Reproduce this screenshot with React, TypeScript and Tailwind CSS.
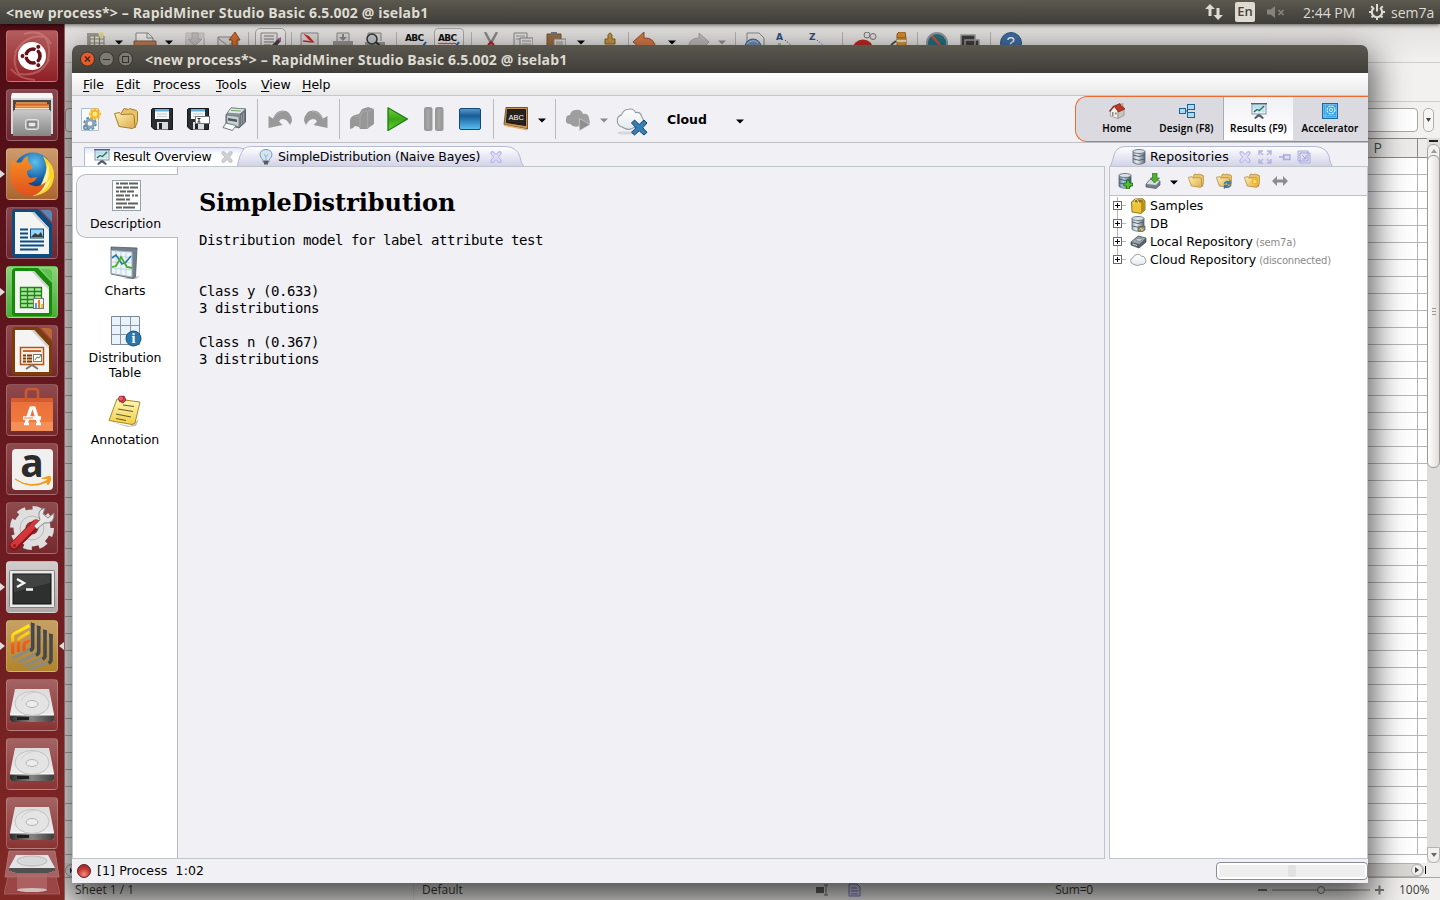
import React from "react";

type SvgProps = { w?: number; h?: number; box?: string; className?: string; children: React.ReactNode };
const Svg = ({ w = 24, h = 24, box, className, children }: SvgProps) => (
  <svg width={w} height={h} viewBox={box ?? `0 0 ${w} ${h}`} fill="none" className={`block shrink-0 ${className ?? ""}`}>
    {children}
  </svg>
);

const Defs = () => (
  <svg width="0" height="0" className="absolute">
    <defs>
      <linearGradient id="green" x1="0" y1="0" x2="0" y2="1"><stop stopColor="#6fd03c" /><stop offset=".5" stopColor="#3ba516" /><stop offset="1" stopColor="#5fd536" /></linearGradient>
      <linearGradient id="stop" x1="0" y1="0" x2="0" y2="1"><stop stopColor="#5b9bd0" /><stop offset=".35" stopColor="#175c97" /><stop offset="1" stopColor="#5cc0f5" /></linearGradient>
      <linearGradient id="folder" x1="0" y1="0" x2="1" y2="1"><stop stopColor="#fdf0b4" /><stop offset="1" stopColor="#dfac4c" /></linearGradient>
      <linearGradient id="metal" x1="0" y1="0" x2="1" y2="0"><stop stopColor="#a6b1bb" /><stop offset=".35" stopColor="#e8eef2" /><stop offset="1" stopColor="#5b6874" /></linearGradient>
      <linearGradient id="blueMetal" x1="0" y1="0" x2="1" y2="0"><stop stopColor="#5b7f9e" /><stop offset=".4" stopColor="#b9d3e6" /><stop offset="1" stopColor="#2f4c66" /></linearGradient>
      <linearGradient id="note" x1="0" y1="0" x2="0" y2="1"><stop stopColor="#fff8b8" /><stop offset="1" stopColor="#f3cf45" /></linearGradient>
      <linearGradient id="cloud" x1="0" y1="0" x2="0" y2="1"><stop stopColor="#ffffff" /><stop offset="1" stopColor="#e4e9ee" /></linearGradient>
      <linearGradient id="bag" x1="0" y1="0" x2="0" y2="1"><stop stopColor="#e96f3a" /><stop offset=".7" stopColor="#f0793c" /><stop offset="1" stopColor="#f58b4d" /></linearGradient>
      <linearGradient id="cab" x1="0" y1="0" x2="0" y2="1"><stop stopColor="#c9c9c9" /><stop offset="1" stopColor="#858585" /></linearGradient>
      <linearGradient id="disk" x1="0" y1="0" x2="0" y2="1"><stop stopColor="#dcdcdc" /><stop offset="1" stopColor="#f1f1f1" /></linearGradient>
      <linearGradient id="diskfront" x1="0" y1="0" x2="1" y2="0"><stop stopColor="#2e2e2e" /><stop offset=".5" stopColor="#858585" /><stop offset="1" stopColor="#3d3d3d" /></linearGradient>
      <linearGradient id="tab" x1="0" y1="0" x2="0" y2="1"><stop stopColor="#ffffff" /><stop offset="1" stopColor="#d3d3ea" /></linearGradient>
      <linearGradient id="tabon" x1="0" y1="0" x2="0" y2="1"><stop stopColor="#dfe4fb" /><stop offset=".4" stopColor="#ffffff" /><stop offset="1" stopColor="#ffffff" /></linearGradient>
      <radialGradient id="globe" cx=".55" cy=".25" r=".7"><stop stopColor="#5cc2ef" /><stop offset=".6" stopColor="#1963a8" /><stop offset="1" stopColor="#0c3470" /></radialGradient>
      <linearGradient id="fox" x1="0" y1="0" x2="0" y2="1"><stop stopColor="#f59224" /><stop offset="1" stopColor="#e0501c" /></linearGradient>
      <linearGradient id="miner" gradientUnits="userSpaceOnUse" x1="6" y1="10" x2="10" y2="30"><stop stopColor="#ffe413" /><stop offset=".45" stopColor="#fbc015" /><stop offset=".6" stopColor="#f2601a" /><stop offset="1" stopColor="#ee5416" /></linearGradient>
      <radialGradient id="red" cx=".5" cy=".75" r=".7"><stop stopColor="#f58d7f" /><stop offset=".6" stopColor="#c53a36" /><stop offset="1" stopColor="#9d2a2a" /></radialGradient>
      <linearGradient id="chartface" x1="0" y1="0" x2="0" y2="1"><stop stopColor="#bfe2f6" /><stop offset="1" stopColor="#f3fafe" /></linearGradient>
    </defs>
  </svg>
);

/* ---------- small shared glyphs ---------- */
const Caret = ({ color = "#000" }: { color?: string }) => (
  <Svg w={8} h={5}><path d="M0 0.5H8L4 4.5Z" fill={color} /></Svg>
);
const FolderShape = () => (
  <g>
    <path d="M7 6.5L10 1.5L14.5 2.5L15.5 1.5L22.5 3.5L23.5 4.5V14.5L21 21" fill="#e9c26a" stroke="#a67c2d" />
    <path d="M.5 6.5L5.5 5.5L7 7.5L18 7L20 8.5L21 20L18.500 21.5L5 19.5Z" fill="url(#folder)" stroke="#a67c2d" />
  </g>
);
const Folder = ({ s = 24, extra }: { s?: number; extra?: "sync" | "new" }) => (
  <Svg w={s} h={s} box="0 0 24 24">
    <FolderShape />
    {extra === "sync" && <path d="M12 15Q16 10 20 13L22 11V17H16L18 15Q15 14 12 17ZM23 18Q20 24 14 22L12 24V18H18L16 20Q19 21 23 18Z" fill="#2b82c9" stroke="#1c4f80" strokeWidth=".4" />}
    {extra === "new" && <><circle cx="16" cy="13" r="6" fill="#ffc73a" opacity=".6" /><circle cx="16" cy="13" r="3.6" fill="#ffdf65" stroke="#f2a01f" strokeWidth="1.4" /></>}
  </Svg>
);
const ScreenChart = ({ s = 16 }: { s?: number }) => (
  <Svg w={s} h={s} box="0 0 16 16">
    <path d="M7 11H9L13 15L11.5 16L8 13.4L4.5 16L3 15Z" fill="#555b62" />
    <rect x="1" y="1" width="14" height="10" fill="url(#chartface)" stroke="#7d95a3" />
    <path d="M0 .5H16" stroke="#59616a" strokeWidth="1.5" />
    <path d="M4 1V11M8 1V11M12 1V11M1 4H15M1 8H15" stroke="#a7cbdd" strokeWidth=".6" />
    <path d="M3 9L6 6.5L8.5 7.5L13 3" stroke="#21744b" strokeWidth="1.3" />
  </Svg>
);
const CloseX = ({ color, fill }: { color: string; fill: string }) => (
  <Svg w={12} h={12}>
    <path d="M1 .8H3.5L6 3.5L8.5 .8H11V3L8.3 6L11 9V11.2H8.5L6 8.5L3.5 11.2H1V9L3.7 6L1 3Z" fill={fill} stroke={color} strokeWidth=".9" />
  </Svg>
);

/* ---------- RapidMiner toolbar icons ---------- */
const NewIcon = () => (
  <Svg>
    <path d="M3.5 1.5H20.5V23.5H3.5Z" fill="#f8fbfd" stroke="#a9c0cf" />
    <circle cx="12" cy="16.500" r="5.500" stroke="#6e8ca3" strokeWidth="2.600" strokeDasharray="2.6 1.720" />
    <circle cx="12" cy="16.500" r="3.800" stroke="#86a3b9" strokeWidth="3" />
    <circle cx="7.500" cy="20.500" r="1.800" stroke="#6e8ca3" strokeWidth="1.500" />
    <circle cx="17" cy="7" r="6" fill="#ffc928" opacity=".65" />
    <path d="M17 1V13M11 7H23M13 3L21 11M21 3L13 11" stroke="#f8a01c" strokeWidth="1.2" />
    <circle cx="17" cy="7" r="3.2" fill="#ffee72" stroke="#f7a521" strokeWidth="1.2" />
  </Svg>
);
const SaveIcon = ({ edit }: { edit?: boolean }) => (
  <Svg>
    <path d="M2.5 1.5H22.5V22.5H4.5L1.5 20V2.5Z" fill="#2b2e32" stroke="#15171a" />
    <rect x="5" y="2" width="14" height="10" fill="#f4f8fa" />
    <path d="M5 2H19V4.500H5Z" fill="#5fb0dc" />
    <path d="M7 7H17M7 9.500H17" stroke="#c2ccd2" />
    <rect x="7" y="15" width="11" height="7.500" fill="#d8dcdf" />
    <rect x="9" y="16" width="3" height="6" fill="#222" />
    {edit && <><rect x="9.5" y="9.5" width="14" height="7" fill="#fff" stroke="#777" /><path d="M11.5 11.500H14.5M13 11V15M11.5 15H14.5" stroke="#222" /></>}
  </Svg>
);
const PrintIcon = () => (
  <Svg>
    <path d="M4 8L9 1L23.500 2V15L17 21L4 17Z" fill="#8b959b" stroke="#5a6268" />
    <path d="M9 1L23.500 2L18 7L5 6Z" fill="#e3e8eb" stroke="#727b80" strokeWidth=".7" />
    <path d="M18 7L23 3V14L17.500 20Z" fill="#6c767c" />
    <path d="M19.500 8V17M21.500 6V15" stroke="#8f999f" />
    <path d="M4.500 8L17 9.500V20L5 17Z" fill="#c9d1d5" stroke="#5f686d" strokeWidth=".7" />
    <path d="M6 11L15 12.500V15L6 13.500Z" fill="#4f585d" />
    <path d="M9 3.500L19 4" stroke="#6da55e" />
    <path d="M4 16L14 18.5L10.500 23.5L1 20.5Z" fill="#fbfcfc" stroke="#727b80" />
  </Svg>
);
const UndoIcon = ({ flip }: { flip?: boolean }) => (
  <Svg className={flip ? "-scale-x-100" : ""}>
    <path d="M.5 9L5 11.500Q8 3.500 15 3.500Q23.500 4 24 14L22 18Q18 10 12.500 12.500L11 14.500L14.500 18L.5 21Z" fill="#999" />
    <path d="M5 12Q9 4.500 16 4.500" stroke="#b0b0b0" strokeWidth="1" />
  </Svg>
);
const BuildIcon = () => (
  <Svg>
    <path d="M0 22V13Q1 9 5 8L9 7L12 2L18 0L24 2V17L17 22L10 22L9 20L5 19L3 21Z" fill="#979797" />
    <path d="M12 5L18 4L24 2.500M17.500 4V22M4 9L10 10L12 5M10 10V20" stroke="#a7a7a7" strokeWidth="1.200" />
  </Svg>
);
const PlayIcon = () => <Svg><path d="M2 .8L21.5 12L2 23.5Z" fill="url(#green)" stroke="#1d7c12" strokeWidth="1.3" strokeLinejoin="round" /></Svg>;
const PauseIcon = () => <Svg><rect x="2" y="0" width="8.5" height="24" rx="2.500" fill="#999" /><rect x="13" y="0" width="8.5" height="24" rx="2.500" fill="#999" /><path d="M6 2V22M17 2V22" stroke="#a5a5a5" strokeWidth="3" /></Svg>;
const StopIcon = () => <Svg><rect x="1.5" y="1.5" width="21" height="21" rx="1.5" fill="url(#stop)" stroke="#134a78" /></Svg>;
const BoardIcon = () => (
  <Svg className="overflow-visible">
    <path d="M2 .500H23.5V22L0 17.5Z" fill="#c9924d" stroke="#5a3a16" strokeWidth=".8" />
    <path d="M3.500 2.500H21.5V18.5L2.500 15.5Z" fill="#26231f" stroke="#191613" />
    <path d="M0 17.500L23 22V23.500L0 19Z" fill="#e5b673" />
    <text x="4.4" y="13" fontSize="7.500" fill="#fff" fontFamily="Liberation Sans">ABC</text>
  </Svg>
);
const CloudPath = "M6 18Q1 17 1 12Q1 8 5 7Q7 2 12 2Q16 1 18 5Q23 4 24 9Q27 12 24 16Q22 19 17 18Q12 22 6 18Z";
const CloudRun = () => (
  <Svg w={26} h={24}><path d="M5 17Q0 17 1 12Q1 8 5 8Q6 3 11 3Q16 2 18 7Q23 6 24 11L25 16Q22 19 17 18Q10 22 5 17Z" fill="#9e9e9e" /><path d="M14.5 11.5L25 17.5L14.5 23.5Z" fill="#8e8e8e" stroke="#c9c9c9" strokeWidth=".8" /></Svg>
);
const CloudOff = () => (
  <Svg w={32} h={30}>
    <ellipse cx="10" cy="27" rx="9" ry="1.6" fill="#d7d8dc" />
    <path d={CloudPath} transform="translate(.2,1) scale(1.07,1.12)" fill="url(#cloud)" stroke="#8f9ba3" strokeWidth="1" />
    <path d="M15.5 17L18.5 14L23.2 18.5L28 14L31 17L26.7 21.8L31 26.3L28 29L23.2 24.8L18.5 29L15.5 26.3L20 21.8Z" fill="#347fb8" stroke="#173f63" />
  </Svg>
);

/* ---------- perspective icons ---------- */
const HomeIcon = () => (
  <Svg w={16} h={16}>
    <path d="M1.500 8L5.5 3.5L9 8V15.5L1.500 13Z" fill="#f3f1ee" stroke="#817a72" strokeWidth=".6" />
    <path d="M9 8L15 6V12.5L9 15.5Z" fill="#cac5be" stroke="#817a72" strokeWidth=".6" />
    <path d="M5 3L11 .5L16 6L9.5 9Z" fill="#b93825" stroke="#6d1c12" strokeWidth=".6" />
    <path d="M5 3L.5 8.5" stroke="#8a2a1b" strokeWidth="1.3" />
    <rect x="3" y="9" width="1.500" height="4" fill="#8f877e" /><rect x="5.800" y="9.5" width="1.800" height="2" fill="#8f877e" />
    <path d="M12.500 0H14.5V3H12.5Z" fill="#b9aaa2" />
  </Svg>
);
const DesignIcon = () => (
  <Svg w={16} h={16}>
    <path d="M6 8H8.500V3.500H10M8.500 8V12.500H10" stroke="#3b4e5c" />
    <rect x=".5" y="5.500" width="6" height="5" fill="#a9dbf4" stroke="#1f628f" /><rect x="8.500" y="1.500" width="7" height="5" fill="#a9dbf4" stroke="#1f628f" /><rect x="8.500" y="9.500" width="7" height="5" fill="#a9dbf4" stroke="#1f628f" />
  </Svg>
);
const AccelIcon = () => (
  <Svg w={16} h={16}>
    <rect x=".5" y=".5" width="15" height="15" fill="#3aa3e4" stroke="#1868a6" />
    <path d="M3.500 1V15M1 12.500H15M1.500 1.500H14.500V14.500H1.500Z" stroke="#7fc6f2" strokeWidth=".7" />
    <circle cx="9" cy="7" r="3.900" stroke="#d8effc" strokeWidth="1.300" strokeDasharray="2.200 .86" /><circle cx="9" cy="7" r="1.6" stroke="#d8effc" strokeWidth="1" />
  </Svg>
);

/* ---------- side tab icons ---------- */
const DescIcon = () => (
  <Svg w={32} h={32}>
    <rect x="2.500" y="1.500" width="28" height="30" fill="#fcfdfe" stroke="#98a2a9" />
    <path d="M6 4.500H9M10 4.500H18M19 4.500H28M6 8.500H12M13 8.500H19M20 8.500H28M6 12.500H9M10 12.500H16M17 12.500H24M6 16.500H14M15 16.500H20M22 16.500H24M25 16.500H28M6 20.500H15M16 20.500H20M6 24.500H17M18 24.500H28M6 28.500H12M13 28.500H25" stroke="#606060" strokeWidth="2" />
  </Svg>
);
const ChartsIcon = () => (
  <Svg w={32} h={34}>
    <path d="M24 31L31 30L27 33H14Z" fill="#c0c3c6" />
    <path d="M2 1L28 2L26.500 31L24 32.500L2 28Z" fill="#71808c" stroke="#505d67" strokeWidth=".8" />
    <path d="M2.500 4.500L23 6V31L2.500 27.500Z" fill="#eef6fa" stroke="#a3b4bf" />
    <path d="M7 5V28M12 5V29M17 6V30M3 10L23 11.500M3 16L23 17M3 22L23 24" stroke="#b9ced9" strokeWidth=".8" />
    <path d="M3 12L7 9L13 18L17 16L22 10" stroke="#2677b6" strokeWidth="1.600" />
    <path d="M3 21L7 20L12 11L18 21L23 22" stroke="#4daa26" strokeWidth="1.800" />
  </Svg>
);
const TableIcon = () => (
  <Svg w={34} h={34}>
    <path d="M3.500 3.500H31.500V31.500H3.500Z" fill="#eaf3fb" stroke="#7a8b97" />
    <path d="M12.500 4V31M22.500 4V31M4 12.500H31M4 21.500H31" stroke="#8998a2" />
    <circle cx="25.500" cy="25.500" r="7.500" fill="#2977ad" stroke="#174e79" />
    <text x="23.500" y="30" fontSize="14" fontWeight="700" fill="#fff" fontFamily="Liberation Serif">i</text>
  </Svg>
);
const NoteIcon = () => (
  <Svg w={34} h={32}>
    <path d="M3 27L22 31L31 24L28 31L20 32Z" fill="#c4c4c4" />
    <path d="M9 4L32 7L27 28L24 29.500L1 25.500Z" fill="url(#note)" stroke="#a88b24" />
    <path d="M15 10L26 11.500M10 14L25 16.500M8 19L23 22M8 23.500L18 25.500" stroke="#615e38" strokeWidth="1.100" />
    <path d="M12 2L16 1L18 5L15 8L11 6Z" fill="#d4414a" stroke="#8b1620" strokeWidth=".8" /><circle cx="13" cy="3.500" r="2.500" fill="#e36169" stroke="#8b1620" strokeWidth=".6" />
  </Svg>
);

/* ---------- repository icons ---------- */
const Db = ({ w = 16, h = 16, plus, plug }: { w?: number; h?: number; plus?: boolean; plug?: boolean }) => (
  <Svg w={w} h={h} box="0 0 16 16">
    <path d="M2 2.500V13.500Q8 17 14 13.500V2.500Z" fill={plus ? "url(#blueMetal)" : "url(#metal)"} stroke="#56636e" strokeWidth=".8" />
    <ellipse cx="8" cy="2.500" rx="6" ry="2" fill="#d9e1e7" stroke="#56636e" strokeWidth=".8" />
    <path d="M2 6Q8 9 14 6M2 9.800Q8 12.800 14 9.800" stroke="#56636e" />
    {plus && <path d="M9.500 7.500H12.500V10H15.500V13H12.500V16H9.500V13H6.800V10H9.500Z" fill="#53c02f" stroke="#176812" strokeWidth=".8" />}
    {plug && <path d="M8 11L15 10V14L12 16L8 15Z" fill="#8b8572" stroke="#605d52" strokeWidth=".7" />}
    {plug && <path d="M9.500 13.500L11 12L12 14.500L13.500 12.500" stroke="#eadb71" />}
  </Svg>
);
const Import = () => (
  <Svg w={16} h={16}>
    <path d="M1 11L5 6.500L15 8V12L11 15.500L1 14Z" fill="#737f89" stroke="#4e5962" strokeWidth=".7" /><path d="M1.500 11L5 7L14.500 8L11 12Z" fill="#d7dee3" />
    <path d="M7.500 0H12V5H14.500L9.500 10L5.500 5H7.500Z" fill="#4db231" stroke="#27751a" strokeWidth=".7" />
  </Svg>
);
const Samples = () => (
  <Svg w={16} h={16}>
    <path d="M1.500 4L5 1L13 .8L15 3V12L11 15.500L2 14Z" fill="#ecc637" stroke="#86691a" strokeWidth=".9" />
    <path d="M11 4.500L15 2.500V12L11 15.500Z" fill="#b98f20" /><path d="M2.500 4L11 4.500L14 2.500L6 1.500Z" fill="#8f6f18" />
    <path d="M4 6Q4 1 6.500 1.500Q9 2 8.500 6" stroke="#f9e889" strokeWidth=".9" />
  </Svg>
);
const Drive = () => (
  <Svg w={17} h={14}>
    <path d="M1 7L8 1L16 3V7L9 13L1 10Z" fill="#59626a" stroke="#3c444a" strokeWidth=".7" /><path d="M1.500 7L8 1.500L15.500 3.200L9.500 9Z" fill="#9da7ae" /><ellipse cx="9" cy="4.800" rx="3" ry="1.500" fill="#cfd6da" stroke="#59626a" strokeWidth=".6" /><path d="M2.500 9L7 10.500" stroke="#ddd" />
  </Svg>
);
const SmallCloud = () => <Svg w={17} h={14} box="0 0 27 22"><path d={CloudPath} fill="url(#cloud)" stroke="#8f989f" strokeWidth="1.500" /></Svg>;

/* ---------- launcher icons ---------- */
const Disk = () => (
  <Svg w={46} h={36}>
    <path d="M6 2H40L45 27V33Q45 35 43 35H3Q1 35 1 33V27Z" fill="url(#disk)" />
    <path d="M1 28H45V33Q45 35 43 35H3Q1 35 1 33Z" fill="url(#diskfront)" />
    <path d="M1 28H45" stroke="#fff" />
    <ellipse cx="23" cy="16.500" rx="17" ry="12" stroke="#c2c2c2" fill="#e4e4e4" /><ellipse cx="23" cy="17" rx="6" ry="3.500" stroke="#b4b4b4" fill="#ececec" />
    <path d="M12 14Q15 6 28 5" stroke="#d0d0d0" strokeWidth="1" /><path d="M8 31.500H20" stroke="#1e1e1e" strokeWidth="3" />
  </Svg>
);
const OfficeDoc = ({ main, dark, children }: { main: string; dark: string; children: React.ReactNode }) => (
  <Svg w={42} h={50}>
    <path d="M5 1H27L41 16V46Q41 49 38 49H4Q1 49 1 46V5Q1 1 5 1Z" fill={main} />
    <path d="M30 2H37Q41 2 41 6V14Z" fill={dark} opacity=".75" />
    <path d="M4 4H23L38 20V46H4Z" fill="#f4f4f3" /><path d="M23 4L38 20V23L20 4Z" fill="#cfd1d0" />
    {children}
  </Svg>
);
const launcher: { tile: string; icon: React.ReactNode; left?: boolean; right?: boolean }[] = [
  {
    tile: "from-[#b35c5e] to-[#8d1e26]",
    icon: (
      <Svg w={50} h={50}>
        <path d="M8 22Q18 3 38 6Q45 17 40 32M42 28Q34 46 12 43Q5 32 9 22M4 38Q12 48 28 49M17 3Q35 -3 44 13" stroke="#d98e8f" strokeWidth="2" opacity=".45" />
        <circle cx="25" cy="25" r="14" fill="#fff" /><circle cx="26" cy="25" r="7" stroke="#65121b" strokeWidth="3.600" />
        <path d="M26 25L16 25M26 25L31 16M26 25L31 34" stroke="#fff" strokeWidth="1.600" /><circle cx="26" cy="25" r="5" fill="#fff" />
        <circle cx="15.500" cy="25" r="2.500" fill="#65121b" stroke="#fff" /><circle cx="31.300" cy="15.800" r="2.500" fill="#65121b" stroke="#fff" /><circle cx="31.300" cy="34.200" r="2.500" fill="#65121b" stroke="#fff" />
      </Svg>
    ),
  },
  {
    tile: "from-[#88474e] to-[#6b262f]",
    icon: (
      <Svg w={46} h={46}>
        <path d="M3 1H43L44 6V42H2V6Z" fill="#d8d8d8" /><path d="M3 1H43L44 6H2Z" fill="#f5f5f5" /><rect x="4" y="8" width="38" height="12" fill="#4a4744" />
        <path d="M6 12H40V22H6Z" fill="#d4672a" /><path d="M7 11H38M7 14.500H40" stroke="#f8a45b" strokeWidth="1.500" /><path d="M6 16H40V17.500H6Z" fill="#fbe6d0" />
        <path d="M4 20L5 18H41L42 20V44H4Z" fill="url(#cab)" /><rect x="16.500" y="27.500" width="13" height="10" rx="2" fill="#b8b8b8" stroke="#e2e2e2" /><rect x="19" y="30" width="8" height="5" fill="#e7e7e7" stroke="#555" />
      </Svg>
    ),
  },
  {
    tile: "from-[#cf9b6d] to-[#a9652f]", left: true,
    icon: (
      <Svg w={48} h={48}>
        <circle cx="25" cy="22" r="19.500" fill="url(#globe)" />
        <path d="M35 6Q47 14 46 27Q44 44 25 46Q33 38 37 30Q41 18 35 6Z" fill="#ffd327" /><path d="M40 13Q43 24 38 34L43 28Q40 41 25 46Q36 35 40 13Z" fill="#fff29a" />
        <path d="M5 10Q9 14 14 12Q16 7 20 6Q19 12 23 15L25 18L19 21Q19 27 23 28L29 27Q27 33 20 33Q27 40 38 32Q33 46 21 46Q7 44 3 31Q0 20 5 10Z" fill="url(#fox)" />
      </Svg>
    ),
  },
  {
    tile: "from-[#874550] to-[#6b262f]",
    icon: (
      <OfficeDoc main="#0b4d82" dark="#4aa0d8">
        <path d="M9 21.500H17M9 25.500H17M9 29.500H17M9 33.500H33M9 37.500H33M9 41.500H27" stroke="#0b4d82" strokeWidth="2" /><rect x="19.500" y="21" width="13" height="9" fill="#94d6f5" stroke="#0b4d82" /><path d="M20 29L24 25L27 27L30 24L32 29Z" fill="#3b3b35" />
      </OfficeDoc>
    ),
  },
  {
    tile: "from-[#8ad27c] to-[#46ac33]", left: true,
    icon: (
      <OfficeDoc main="#168b08" dark="#4fc03f">
        <path d="M9.500 20.500H30.500V40.500H9.500ZM9.500 24.500H30.500M9.500 28.500H30.500M9.500 32.500H30.500M9.500 36.500H30.500M16.500 20.500V40.500M23.500 20.500V40.500" fill="#aee3a4" stroke="#168b08" strokeWidth="1.300" />
        <rect x="22.500" y="31.500" width="10" height="10" fill="#f4f4f4" stroke="#777" /><path d="M25 36V41" stroke="#43a5dd" strokeWidth="2" /><path d="M28 33V41" stroke="#ef7a1c" strokeWidth="2" /><path d="M31 37V41" stroke="#eec22b" strokeWidth="2" />
      </OfficeDoc>
    ),
  },
  {
    tile: "from-[#8f4a4e] to-[#74292d]",
    icon: (
      <OfficeDoc main="#7d3c08" dark="#c9712c">
        <path d="M9.500 21.500H32.500V38.500H9.500Z" fill="#fbeee4" stroke="#b25519" strokeWidth="1.500" /><path d="M12 25H30" stroke="#c7642a" strokeWidth="2" /><path d="M12 29.500H15M12 32.500H15M12 35.500H15M16 29.500H21M16 32.500H21M16 35.500H21" stroke="#7d3c08" strokeWidth="2" /><rect x="22.500" y="28.500" width="8" height="7" fill="#fff" stroke="#777" /><path d="M24 34L26 31L28 32L30 29" stroke="#38a02c" /><path d="M15 43L21 39L27 43" stroke="#777" strokeWidth="2" />
      </OfficeDoc>
    ),
  },
  {
    tile: "from-[#8f4a4e] to-[#74292d]",
    icon: (
      <Svg w={46} h={46}>
        <path d="M2 11H44V44H2Z" fill="url(#bag)" /><path d="M2 11H44V15H2Z" fill="#d35c33" /><path d="M2 35H44V44H2Z" fill="#f58f58" />
        <path d="M17 14V5Q17 2 20 2H26Q29 2 29 5V14" stroke="#c95a30" strokeWidth="2.600" />
        <path d="M17 37L22 21H25L30 37" stroke="#fff" strokeWidth="3.500" strokeLinejoin="round" /><path d="M14 31H32" stroke="#fff" strokeWidth="3.500" /><path d="M15 31H24" stroke="#ef7b43" strokeWidth="1" /><path d="M15 37.200H20M27 37.200H32" stroke="#fff" strokeWidth="2.200" />
      </Svg>
    ),
  },
  {
    tile: "from-[#8f4a4e] to-[#74292d]",
    icon: (
      <div className="relative flex h-[41px] w-[41px] items-center justify-center rounded-[4px] bg-[#f0f0ef]">
        <span className="-mt-[14px] [font-family:'Open_Sans',sans-serif] text-[39px] leading-[38px] font-bold text-[#2b2b2b]">a</span>
        <Svg w={38} h={12} className="absolute bottom-[2px] left-[2px]"><path d="M1 3Q17 14 34 4L33 2.500H28L36 0Q38 4 34 9L33 6Q16 14 1 3Z" fill="#f59a1b" stroke="#f59a1b" strokeWidth="1" /></Svg>
      </div>
    ),
  },
  {
    tile: "from-[#8f4a4e] to-[#74292d]",
    icon: (
      <Svg w={46} h={46}>
        <circle cx="23" cy="23" r="19" stroke="#ddd" strokeWidth="6" strokeDasharray="8 6.920" /><circle cx="23" cy="23" r="12.500" stroke="#dfdfdf" strokeWidth="12" /><circle cx="23" cy="23" r="12" stroke="#b9b9b9" />
        <path d="M5 41L27 19" stroke="#8c1217" strokeWidth="9" strokeLinecap="round" /><path d="M5 40L27 18" stroke="#d4373b" strokeWidth="6.500" strokeLinecap="round" /><path d="M25 21L31 15Q27 5 36 3L34 9L39 13L45 8Q46 19 35 18L28 24Z" fill="#e7e7e5" stroke="#888" /><circle cx="5.500" cy="40.500" r="1.500" fill="#821" />
      </Svg>
    ),
  },
  {
    tile: "from-[#d2cccc] to-[#b1a6a6]", left: true,
    icon: (
      <Svg w={46} h={40} className="mt-[4px]">
        <rect x=".5" y="1.500" width="45" height="37" rx="1" fill="#e9e9e7" stroke="#828282" /><rect x="4" y="5" width="38" height="30" fill="#2e302f" stroke="#111" /><path d="M4.500 5.500H41.500L41 14L5 23Z" fill="#4a4c4b" opacity=".7" />
        <path d="M8 10L15 14L8 18M17 20.500H24" stroke="#f5f5f5" strokeWidth="2.300" />
      </Svg>
    ),
  },
  {
    tile: "from-[#c7a066] to-[#b18528]", left: true, right: true,
    icon: (
      <Svg w={48} h={50}>
        <path d="M4.700 33V15Q4.700 13.500 6 12.800L21.500 4.500M10.500 31V20Q10.500 18 12 17L21.500 11M16 30V25Q16 22.500 18 21.500L21.500 19" stroke="url(#miner)" strokeWidth="3.200" />
        <path d="M24.700 27L4.500 37.500M30.700 31.500L10.500 41.500M37 36L16 45M43 40L22 48.500" stroke="#8e897f" strokeWidth="3.400" />
        <path d="M24.700 2V27Q24.500 28.500 22 29.500M30.700 5V31.500Q30.500 33 28 34M37 9V35.500Q36.800 37 34.500 38M43 13V39.500Q42.800 41 40.500 42" stroke="#46494c" strokeWidth="3.600" />
        <path d="M22.900 1L26.500 3V5H22.900ZM28.900 4L32.500 6V8H28.900ZM35.200 8L38.800 10V12H35.200ZM41.200 12L44.800 14V16H41.200Z" fill="#46494c" />
      </Svg>
    ),
  },
  { tile: "from-[#a46363] to-[#8a3434]", icon: <Disk /> },
  { tile: "from-[#a46363] to-[#8a3434]", icon: <Disk /> },
  { tile: "from-[#a46363] to-[#8a3434]", icon: <Disk /> },
];

const Launcher = () => (
  <aside className="flex w-[65px] shrink-0 flex-col border-r border-[#8f5d61] bg-gradient-to-b from-[#4e0d14] via-[#681920] to-[#802824] pt-[6px]">
    {launcher.map((l, i) => (
      <div key={i} className="flex h-[59px] shrink-0 items-start">
        <div className="flex h-[52px] w-[6px] items-center">{l.left && <Svg w={5} h={8}><path d="M0 0L5 4L0 8Z" fill="#dcdcdc" /></Svg>}</div>
        <div className={`flex h-[52px] w-[52px] items-center justify-center rounded-[4px] border border-white/20 bg-gradient-to-b ${l.tile}`}>{l.icon}</div>
        <div className="flex h-[52px] w-[6px] items-center justify-end">{l.right && <Svg w={5} h={8}><path d="M5 0L0 4L5 8Z" fill="#dcdcdc" /></Svg>}</div>
      </div>
    ))}
    <Svg w={56} h={46} className="-mt-[6px] ml-[4px]">
      <path d="M5 1H51L55 27H1Z" fill="#a46263" stroke="#b77a7a" strokeWidth=".8" /><path d="M4 27H52L56 44H0Z" fill="#9b4546" stroke="#a96464" strokeWidth=".8" />
      <path d="M12 5H44L51 18V21L44 23H12L5 21V18Z" fill="#e4e4e4" /><path d="M5 18H51V21L44 23H12L5 21Z" fill="#505050" /><ellipse cx="28" cy="11" rx="15" ry="5" fill="#d8d8d8" stroke="#bbb" /><path d="M13 24H43V40H13Z" fill="#b36c6c" opacity=".7" /><ellipse cx="28" cy="40" rx="15" ry="2" fill="#cfc0bd" />
    </Svg>
  </aside>
);

/* ---------- spreadsheet behind ---------- */
const Sep = () => <div className="h-[20px] w-px bg-[#b9b7b4]" />;
const Abc = ({ on }: { on?: boolean }) => (
  <div className={on ? "-mt-[4px] flex h-[28px] w-[30px] justify-center rounded-[4px] border border-[#aaa] bg-white/20 pt-[3px]" : ""}>
    <Svg w={22} h={16}><text x="0" y="9" fontSize="9" fontWeight="700" fill="#111" fontFamily="DejaVu Sans" textLength="19">ABC</text>{on && <path d="M0 11L2 12L4 11L6 12L8 11L10 12L12 11L14 12L16 11L18 12" stroke="#d22" />}<path d="M18 14L21 10" stroke="#2f5da1" strokeWidth="2" /></Svg>
  </div>
);
const g = "#8a8988";
const sheetTools: [string, React.ReactNode][] = [
  ["w-[24px]", <Svg w={22} h={22}><path d="M2 1H16V22H2Z" fill="#a09f92" /><path d="M5 4H19V22H5Z" fill="#e7e6df" stroke={g} /><path d="M5 7H19M5 11H19M9.500 4V20M14.500 4V20" stroke="#8a8877" strokeWidth="1.200" /><path d="M13 1L18 0L19 4L15 6Z" fill="#e5dd84" /></Svg>],
  ["w-[22px]", <div className="pt-[8px]"><Caret /></div>],
  ["w-[30px]", <Svg w={24} h={22}><path d="M3 12V1H15L20 6V12" fill="#f3f2f0" stroke={g} /><path d="M14 1V6H20" stroke={g} /><path d="M1 9H23V20H1Z" fill="#c3825c" stroke="#91573a" /></Svg>],
  ["w-[18px]", <div className="pt-[8px]"><Caret /></div>],
  ["w-[34px]", <Svg w={22} h={22}><path d="M2 6V1H20V22M2 6L1 20H21L20 6" stroke="#c0bfbd" fill="#d2d1cf" /><path d="M8 1H14V7H18L11 14L4 7H8Z" fill="#c5c3c1" stroke="#aeacaa" /></Svg>],
  ["w-[34px]", <Svg w={24} h={22}><path d="M1 5H21V20H1Z" fill="#dedcda" stroke={g} /><path d="M1 6L11 14L21 6" stroke={g} /><path d="M15 19V8H12L18 0L23 8H20V19Z" fill="#d97036" stroke="#96451d" /></Svg>],
  ["w-[4px]", <Sep />],
  ["w-[40px]", <div className="-mt-[4px] flex h-[30px] w-[31px] justify-center rounded-[5px] border border-[#a7a5a2] bg-white/25 pt-[3px]"><Svg w={22} h={22}><path d="M2 1H18V20H2Z" fill="#eceae8" stroke={g} /><path d="M5 4H15M5 7H15M5 10H15M5 13H12" stroke="#777" /><path d="M11 15L20 6L22 9L14 18Z" fill="#484346" /><path d="M19 7L22 5L23 8L21 10Z" fill="#ae5d96" /></Svg></div>],
  ["w-[2px]", <Sep />],
  ["w-[36px]", <Svg w={20} h={22}><path d="M1 1H18V22H1Z" fill="#dddbd9" stroke="#888" /><path d="M3 1.500L9 4L15 11L9 8Z" fill="#d22b2c" /><path d="M3 9L13 10" stroke="#c92b2c" strokeWidth="1.500" /></Svg>],
  ["w-[30px]", <Svg w={22} h={22}><path d="M5 9V1H17V9" fill="#dcdad8" stroke="#888" /><path d="M10 2H12V5H15L11 9L7 5H10Z" fill="#888" /><path d="M1 9H21V20H1Z" fill="#9b9997" /></Svg>],
  ["w-[34px]", <Svg w={22} h={22}><path d="M4 9V1H17V9" fill="#dcdad8" stroke="#888" /><path d="M1 10H21V20H1Z" fill="#9b9997" /><circle cx="8" cy="7" r="5" fill="#c5cacd" stroke="#333" strokeWidth="1.500" /><path d="M12 10L18 16" stroke="#333" strokeWidth="2" /></Svg>],
  ["w-[8px]", <Sep />],
  ["w-[32px]", <Abc />],
  ["w-[34px]", <Abc on />],
  ["w-[10px]", <Sep />],
  ["w-[30px]", <Svg w={16} h={22}><path d="M2 0L9 13M14 0L7 13" stroke="#8f8d8b" strokeWidth="2.500" /><path d="M5 13L8 10L11 13" stroke="#b22" strokeWidth="2" /></Svg>],
  ["w-[34px]", <Svg w={20} h={22}><path d="M1 1H14V16H1Z" fill="#e8e6e3" stroke={g} /><path d="M3 4H12M3 7H12" stroke="#999" /><path d="M7 6H20V22H7Z" fill="#edebe8" stroke={g} /><path d="M9 9H18M9 12H18" stroke="#999" /></Svg>],
  ["w-[32px]", <Svg w={20} h={22}><path d="M1 2H15V20H1Z" fill="#9c7145" stroke="#755631" /><path d="M5 0H11V4H5Z" fill="#777" /><path d="M8 7H20V22H8Z" fill="#e6e3df" stroke={g} /><path d="M10 10H17M10 12H17" stroke="#999" /></Svg>],
  ["w-[18px] mr-[4px]", <div className="pt-[8px]"><Caret /></div>],
  ["w-[32px]", <Svg w={14} h={22}><path d="M5 7V3Q7 -1 9 3V7H12V12H2V7Z" fill="#cb9848" stroke="#876222" /></Svg>],
  ["w-[4px]", <Sep />],
  ["w-[30px]", <Svg w={24} h={22}><path d="M0 10L11 0V6Q22 5 23 18H12V20Z" fill="#d87b48" stroke="#995130" /></Svg>],
  ["w-[24px]", <div className="pt-[8px]"><Caret /></div>],
  ["w-[28px]", <Svg w={22} h={22}><path d="M22 10L12 1V6Q1 6 1 18H12V20Z" fill="#c2c0be" stroke="#a9a7a5" /></Svg>],
  ["w-[20px]", <div className="pt-[8px]"><Caret color="#979593" /></div>],
  ["w-[6px]", <Sep />],
  ["w-[34px]", <Svg w={22} h={22}><path d="M3 1H15L20 6V22H3Z" fill="#e8e7e5" stroke={g} /><circle cx="9" cy="15" r="8" fill="#7690b5" stroke="#426796" /><path d="M3 12Q9 6 14 11M2 16H16" stroke="#c2cfdf" /></Svg>],
  ["w-[26px]", <Svg w={18} h={22}><text x="0" y="8" fontSize="9" fontWeight="700" fill="#26508d" fontFamily="DejaVu Sans">A</text><path d="M9 8L17 15" stroke="#333" strokeDasharray="1 2" /><path d="M2 12H5" stroke="#3a3" /></Svg>],
  ["w-[40px]", <Svg w={18} h={22}><text x="0" y="8" fontSize="9" fontWeight="700" fill="#26508d" fontFamily="DejaVu Sans">Z</text><path d="M8 8L16 15" stroke="#26508d" strokeDasharray="1 2" /></Svg>],
  ["w-[8px]", <Sep />],
  ["w-[38px]", <Svg w={24} h={22}><circle cx="10" cy="18" r="10.500" fill="#c12a27" /><circle cx="14" cy="3" r="3" fill="#e3e1de" stroke="#777" /><circle cx="20" cy="4.500" r="3" fill="#e3e1de" stroke="#777" /></Svg>],
  ["w-[30px]", <Svg w={18} h={22}><path d="M7 2L9 0H15L16 6H7Z" fill="#d78c32" stroke="#965e1d" /><path d="M7 6H16V20H7Z" fill="#e09b40" stroke="#a67530" /><path d="M7 9H16" stroke="#f5e5c5" strokeWidth="2" /><path d="M1 13L6 9" stroke="#555" strokeWidth="2" /></Svg>],
  ["w-[6px]", <Sep />],
  ["w-[34px]", <Svg w={22} h={22}><circle cx="11" cy="11" r="10" fill="#286f80" stroke="#939a9e" strokeWidth="2" /><path d="M6 4L14 13" stroke="#d7533b" strokeWidth="2.500" /></Svg>],
  ["w-[32px]", <Svg w={22} h={22}><path d="M2 3H16V16H2ZM6 8H20V20H6Z" fill="#3d3d3b" stroke="#a19f9d" strokeWidth="1.500" /></Svg>],
  ["w-[8px]", <Sep />],
  ["w-[34px]", <Svg w={22} h={22}><circle cx="11" cy="11" r="10.500" fill="#416fa5" stroke="#315783" /><text x="6.500" y="15" fontSize="15" fill="#fff" fontFamily="Liberation Sans">?</text></Svg>],
];

const uiFont = "[font-family:'Open_Sans','Noto_Sans',sans-serif]";

const Spreadsheet = () => (
  <section className={`flex min-w-0 flex-1 flex-col bg-[#f2f1f0] ${uiFont}`}>
    <div className="flex h-[39px] shrink-0 items-start border-b border-[#cfcdca] bg-gradient-to-b from-[#e2e1df] to-[#f2f1ef] pt-[8px] pl-[19px]">
      {sheetTools.map(([w, icon], i) => <div key={i} className={`flex shrink-0 justify-center ${w}`}>{icon}</div>)}
    </div>
    <div className="h-[39px] shrink-0 border-b border-[#cfcdca]" />
    <div className="flex h-[36px] shrink-0 items-center justify-end gap-[5px] pr-[6px]">
      <div className="h-[24px] flex-1 rounded-[4px] border border-[#a9a7a2] bg-white" />
      <div className="flex h-[24px] w-[11px] items-center justify-center rounded-[5px] border border-[#b1afaa] bg-[#f7f6f5]"><Svg w={5} h={4}><path d="M0 0H5L2.500 4Z" fill="#444" /></Svg></div>
    </div>
    <div className="flex h-[725px] shrink-0">
      <div className="flex min-w-0 flex-1 flex-col bg-white">
        <div className="flex h-[20px] shrink-0 border-y border-[#8b8a84] bg-[#edecea]">
          <div className="w-[1353px] border-r border-[#8b8a84] pr-[35px] text-right text-[14px] leading-[17px] text-[#4b4e50]">P</div>
        </div>
        {Array.from({ length: 41 }, (_, i) => (
          <div key={i} className="flex h-[17px] shrink-0 border-b border-[#b6b6b6]"><div className="w-[1353px] border-r border-[#b6b6b6]" /></div>
        ))}
      </div>
      <div className="flex w-[13px] flex-col items-center bg-[#dfdddb]">
        <div className="mt-[2px] mb-[2px] h-[2px] w-[9px] bg-[#222]" />
        <div className="flex h-[20px] w-[13px] items-center justify-center rounded-t-[6px] border border-[#a9a7a2] bg-[#f1f0ee] pb-[6px]"><Svg w={6} h={4}><path d="M0 4H6L3 0Z" fill="#999" /></Svg></div>
        <div className="-mt-[9px] flex h-[313px] w-[13px] flex-col items-center justify-center gap-[2px] rounded-[6px] border border-[#9b9994] bg-gradient-to-r from-white to-[#e0deda]">
          <div className="h-px w-[4px] bg-[#999]" /><div className="h-px w-[4px] bg-[#999]" /><div className="h-px w-[4px] bg-[#999]" />
        </div>
        <div className="flex-1" />
        <div className="flex h-[16px] w-[13px] items-center justify-center rounded-b-[6px] border border-[#b5b3ae] bg-[#f1f0ee]"><Svg w={6} h={4}><path d="M0 0H6L3 4Z" fill="#666" /></Svg></div>
      </div>
    </div>
    <div className="flex h-[15px] shrink-0 items-center justify-between border-b border-[#a9a7a2] bg-[#eeedeb]">
      <div className="h-[13px] w-[14px] rounded-full border border-[#aaa]"><Svg w={12} h={11}><path d="M4.500 3V8M8 3L5 5.500L8 8Z" fill="#333" stroke="#333" /></Svg></div>
      <div className="flex items-center gap-[1px] pr-[14px]">
        <div className="flex h-[14px] w-[400px] items-center justify-end rounded-full border border-[#b5b3ae] bg-[#dad8d5]"><div className="flex h-[12px] w-[12px] items-center justify-center rounded-full border border-[#b5b3ae] bg-[#f2f1ef]"><Svg w={4} h={6}><path d="M0 0L4 3L0 6Z" fill="#444" /></Svg></div></div>
        <div className="h-[8px] w-px bg-black" />
      </div>
    </div>
    <footer className="flex min-h-0 flex-1 items-center bg-[#f1f0ee] pt-[2px] text-[12px] leading-[14px] text-[#3c3c3c]">
      <span className="w-[348px] pl-[10px]">Sheet 1 / 1</span><span className="w-px self-stretch bg-[#ccc]/40" />
      <span className="w-[391px] pl-[8px]">Default</span>
      <span className="flex w-[23px] justify-end"><Svg w={12} h={12}><path d="M0 3H8V9H0Z" fill="#6a6a6a" /><path d="M8 1H12M10 1V11M8 11H12" stroke="#777" /></Svg></span>
      <span className="flex w-[33px] justify-end"><Svg w={13} h={14}><path d="M1 1H9L12 4V13H1Z" stroke="#7c7cc4" fill="#dcdcf4" /><path d="M3 5H9M3 8H10M3 11H10" stroke="#7c7cc4" /></Svg></span>
      <span className="w-[232px] text-right tracking-[-0.2px]">Sum=0</span>
      <span className="flex w-[174px] justify-end text-[#555]"><Svg w={9} h={12}><path d="M0 6H9" stroke="#777" strokeWidth="2" /></Svg></span>
      <span className="flex w-[108px] justify-center"><Svg w={106} h={12}><path d="M4 6H102" stroke="#8a8a88" /><circle cx="53" cy="6" r="3.500" fill="#eee" stroke="#777" /></Svg></span>
      <Svg w={10} h={12}><path d="M0 6H9M4.500 1.500V10.500" stroke="#777" strokeWidth="2" /></Svg>
      <span className="ml-[14px]">100%</span>
    </footer>
  </section>
);

/* ---------- RapidMiner window ---------- */
const TITLE = "<new process*> – RapidMiner Studio Basic 6.5.002 @ iselab1";
const titleText = `${uiFont} text-[14px] font-bold whitespace-nowrap text-[#dfdbd2]`;

const menus: [string, string][] = [["File", "w-[33px]"], ["Edit", "w-[37px]"], ["Process", "w-[63px]"], ["Tools", "w-[45px]"], ["View", "w-[41px]"], ["Help", ""]];
const Cell = ({ children }: { children: React.ReactNode }) => <div className="flex w-[36px] justify-center">{children}</div>;
const BarSep = () => <div className="mr-[4px] ml-[5px] h-[40px] w-px bg-[#bcbcc0]" />;

const Persp = ({ label, icon, w, on }: { label: string; icon: React.ReactNode; w: string; on?: boolean }) => (
  <div className={`flex shrink-0 flex-col items-center gap-[3px] pt-[6px] ${w} ${on ? "mb-px border-l border-[#aaaab0] bg-gradient-to-b from-[#f1f1f6] to-white" : ""}`}>
    {icon}
    <span className="[font-family:'Open_Sans',sans-serif] text-[10px] leading-[12px] font-semibold tracking-[0.15px] whitespace-nowrap [-webkit-text-stroke:0.1px_#000]">{label}</span>
  </div>
);

const TreeRow = ({ icon, label, note, last }: { icon: React.ReactNode; label: string; note?: string; last?: boolean }) => (
  <div className="flex h-[18px] items-center">
    <Svg w={20} h={18}>
      <path d={last ? "M7.500 0V9" : "M7.500 0V18"} stroke="#b5b5b5" /><path d="M8 8.500H16" stroke="#b5b5b5" />
      <rect x="3.500" y="4.500" width="8" height="8" fill="#fff" stroke="#6b6b6b" /><path d="M5 8.500H10M7.500 6V11" stroke="#000" />
    </Svg>
    <div className="flex w-[20px] justify-start">{icon}</div>
    <span className="whitespace-pre">{label}</span>
    {note && <span className="ml-[3px] pt-px text-[10px] tracking-[-0.2px] text-[#8a8a8a]">{note}</span>}
  </div>
);

const SideTab = ({ icon, children, h }: { icon: React.ReactNode; children: React.ReactNode; h: string }) => (
  <div className={`flex flex-col items-center gap-[3px] border-r border-[#bcbcc0] pt-[8px] text-center leading-[15px] ${h}`}>{icon}<span>{children}</span></div>
);

const RapidMiner = () => (
  <main className="absolute top-[45px] left-[72px] flex h-[838px] w-[1296px] flex-col overflow-visible rounded-t-[7px] bg-[#f0f0f5] [font-family:'DejaVu_Sans',sans-serif] text-[12.5px] text-black shadow-[0_13px_34px_5px_rgba(0,0,0,0.68)]">
    <header className="flex h-[28px] shrink-0 items-center rounded-t-[7px] bg-gradient-to-b from-[#5a574e] to-[#3f3e3a] pl-[8px]">
      <Svg w={54} h={16}>
        <circle cx="7.500" cy="8" r="7" fill="#e9592b" stroke="#37352f" /><path d="M5 5.500L10 10.500M10 5.500L5 10.500" stroke="#3a2a22" strokeWidth="1.400" />
        <circle cx="26.500" cy="8" r="7" fill="#7b7970" stroke="#37352f" /><path d="M23 8.500H30" stroke="#33322e" />
        <circle cx="45.500" cy="8" r="7" fill="#7b7970" stroke="#37352f" /><rect x="42.500" y="5.500" width="6" height="6" stroke="#33322e" />
      </Svg>
      <span className={`ml-[11px] tracking-[0.14px] ${titleText}`}>{TITLE}</span>
    </header>

    <nav className="flex h-[23px] shrink-0 items-center border-b border-[#c8c8cc] bg-gradient-to-b from-white to-[#e8e8e8] pt-[2px] pl-[11px]">
      {menus.map(([m, w]) => <span key={m} className={w}><span className="underline underline-offset-2">{m[0]}</span>{m.slice(1)}</span>)}
    </nav>

    <div className="flex h-[47px] shrink-0 justify-between border-b border-[#bfc0c4]">
      <div className="flex items-center">
        <Cell><NewIcon /></Cell><Cell><Folder /></Cell><Cell><SaveIcon /></Cell><Cell><SaveIcon edit /></Cell><Cell><PrintIcon /></Cell>
        <BarSep />
        <Cell><UndoIcon /></Cell><Cell><UndoIcon flip /></Cell>
        <BarSep />
        <Cell><BuildIcon /></Cell><Cell><PlayIcon /></Cell><Cell><PauseIcon /></Cell><Cell><StopIcon /></Cell>
        <BarSep />
        <Cell><BoardIcon /></Cell>
        <div className="mt-[3px] w-[16px] pl-[4px]"><Caret /></div>
        <BarSep />
        <Cell><CloudRun /></Cell>
        <div className="mt-[3px] w-[20px] pl-[4px]"><Caret color="#8a8a8a" /></div>
        <div className="mt-[4px]"><CloudOff /></div>
        <span className="mt-[2px] ml-[19px] w-[69px] font-bold">Cloud</span>
        <div className="mt-[4px]"><Caret /></div>
      </div>
      <div className="flex w-[293px] overflow-hidden rounded-l-[12px] border border-r-0 border-[#ee6a33] bg-[#dadae0]">
        <Persp label="Home" icon={<HomeIcon />} w="w-[82px]" />
        <Persp label="Design (F8)" icon={<DesignIcon />} w="mr-[8px] w-[57px]" />
        <Persp label="Results (F9)" icon={<ScreenChart />} w="w-[70px]" on />
        <Persp label="Accelerator" icon={<AccelIcon />} w="w-[74px]" />
      </div>
    </div>

    <div className="flex min-h-0 flex-1 gap-[4px]">
      <section className="flex w-[1033px] flex-col">
        <div className="relative flex h-[23px] shrink-0 items-center pt-[5px] pl-[22px]">
          <Svg w={460} h={20} className="absolute top-[3px] left-[10px]">
            <path d="M153.500 20Q157 15 158 9Q159 1 169 .5H424Q435 1 438 11Q439 17 441.500 20" fill="url(#tab)" stroke="#b3bad4" />
            <path d="M2.500 20V1.500H152Q158 1 162 3Q157 9 155.500 20" fill="url(#tabon)" stroke="#b3bad4" />
          </Svg>
          <div className="relative flex items-center"><ScreenChart /><span className="ml-[3px] w-[108px] tracking-[-0.2px]">Result Overview</span><CloseX color="#c0c0c6" fill="#cfcfd4" /></div>
          <div className="relative ml-[26px] flex items-center">
            <Svg w={14} h={16}><path d="M4 11Q1 8 1 5.500Q1.500 .5 7 .5Q12.500 .5 13 5.500Q13 8 10 11V13H4Z" fill="#d4e5f2" stroke="#7e98ad" /><path d="M5 5L7 8L9 5M7 8V11" stroke="#8aa6bb" strokeWidth=".8" /><path d="M4.500 12.500H9.500M5 14.500H9" stroke="#555c63" strokeWidth="2" /></Svg>
            <span className="ml-[5px] w-[212px] tracking-[-0.14px]">SimpleDistribution (Naive Bayes)</span><CloseX color="#a9a9da" fill="#dcdcf6" />
          </div>
        </div>
        <div className="flex min-h-0 flex-1 border border-[#bfc6cb]">
          <aside className="flex w-[105px] shrink-0 flex-col bg-white">
            <div className="h-[7px] border-r border-[#bcbcc0]" />
            <div className="ml-[3px] flex h-[64px] flex-col items-center gap-[4px] rounded-l-[10px] border border-r-0 border-[#bcbcc0] bg-[#f0f0f5] pt-[4px] pr-[4px] leading-[15px]"><DescIcon /><span className="mt-[1px]">Description</span></div>
            <SideTab icon={<ChartsIcon />} h="h-[67px]">Charts</SideTab>
            <SideTab icon={<TableIcon />} h="h-[82px]">Distribution<br />Table</SideTab>
            <SideTab icon={<NoteIcon />} h="flex-1"><span className="mt-[2px] block">Annotation</span></SideTab>
          </aside>
          <article className="pt-[19px] pl-[21px]">
            <h1 className="[font-family:'DejaVu_Serif',serif] text-[24px] leading-[34px] font-bold tracking-[-0.04px] whitespace-nowrap">SimpleDistribution</h1>
            <pre className="mt-[12px] [font-family:'DejaVu_Sans_Mono',monospace] text-[14px] leading-[17px] tracking-[-0.428px]">{`Distribution model for label attribute test


Class y (0.633)
3 distributions

Class n (0.367)
3 distributions`}</pre>
          </article>
        </div>
      </section>

      <section className="flex min-w-0 flex-1 flex-col">
        <div className="relative flex h-[23px] shrink-0 items-center pt-[5px] pl-[22px]">
          <Svg w={226} h={20} className="absolute top-[3px] left-0">
            <path d="M1.500 20Q4 14 5 9Q7 1 16 .5H206Q217 1 220 10Q221 17 223 20" fill="url(#tab)" stroke="#b3bad4" />
          </Svg>
          <div className="relative flex items-center">
            <Db /><span className="ml-[3px] w-[89px] tracking-[0.18px]">Repositories</span>
            <CloseX color="#aaaadb" fill="#dedef6" />
            <Svg w={14} h={14} className="ml-[7px]"><path d="M1 5V1H5M9 1H13V5M13 9V13H9M5 13H1V9M1 1L5 5M13 1L9 5M13 13L9 9M1 13L5 9" stroke="#b2b2de" strokeWidth="1.400" /></Svg>
            <Svg w={12} h={12} className="ml-[7px]"><path d="M0 6H4M4.500 3V9.500M5 4H11V8.500H5Z" stroke="#aaaadb" fill="#dedef6" strokeWidth="1.300" /></Svg>
            <Svg w={14} h={14} className="ml-[6px]"><path d="M1 1H11V3H13V13H3V11H1Z" stroke="#aaaadb" fill="#e4e4f6" /><path d="M3 3H11V11H3ZM5 5L9 9M9 5V9H5" stroke="#9f9fd2" /></Svg>
          </div>
        </div>
        <div className="flex min-h-0 flex-1 flex-col border border-[#bfc6cb] bg-white">
          <div className="flex h-[29px] shrink-0 items-center border-b border-[#c0c0c4] bg-[#f0f0f5] pl-[7px]">
            <Db w={16} h={16} plus /><div className="ml-[12px]"><Import /></div><div className="mt-[3px] ml-[9px]"><Caret /></div>
            <div className="ml-[10px]"><Folder s={16} /></div><div className="ml-[12px]"><Folder s={16} extra="sync" /></div><div className="ml-[12px]"><Folder s={16} extra="new" /></div>
            <Svg w={16} h={12} className="ml-[12px]"><path d="M0 6L5 1V4.500H11V1L16 6L11 11V7.500H5V11Z" fill="#8d8d8d" /></Svg>
          </div>
          <div className="flex flex-col pt-[1px]">
            <TreeRow icon={<Samples />} label="Samples" />
            <TreeRow icon={<Db plug />} label="DB" />
            <TreeRow icon={<Drive />} label="Local Repository" note="(sem7a)" />
            <TreeRow icon={<SmallCloud />} label="Cloud Repository" note="(disconnected)" last />
          </div>
        </div>
      </section>
    </div>

    <footer className="flex h-[24px] shrink-0 items-center justify-between pl-[5px]">
      <div className="flex items-center gap-[6px]"><Svg w={14} h={14}><circle cx="7" cy="7" r="6.500" fill="url(#red)" stroke="#6b1e1e" /></Svg><span className="tracking-[0.12px] whitespace-pre">[1] Process  1:02</span></div>
      <div className="flex h-[18px] w-[152px] items-center justify-center rounded-[4px] border border-[#8b8b94] bg-white p-px"><div className="flex h-[12px] w-[146px] justify-center bg-[#efefef]"><div className="h-[12px] w-[8px] rounded-[2px] bg-[#e1e1e1]" /></div></div>
    </footer>
  </main>
);

const TopPanel = () => (
  <header className={`flex h-[24px] shrink-0 items-center bg-gradient-to-b from-[#5c594f] to-[#3e3d39] text-[#dfdbd2] shadow-[0_1px_4px_rgba(0,0,0,0.6)] ${uiFont}`}>
    <span className={`ml-[6px] flex-1 tracking-[0.14px] ${titleText}`}>{TITLE}</span>
    <Svg w={18} h={18}><path d="M5 1L10 6H6.500V13H3.500V6H0ZM13 17L8.500 12H11.500V5H14.500V12H18Z" fill="#dfdbd2" /></Svg>
    <span className="ml-[12px] flex h-[20px] w-[20px] items-center justify-center rounded-[2px] bg-[#dfdbd2] text-[13px] font-semibold text-[#45443e]">En</span>
    <Svg w={18} h={14} className="ml-[12px]"><path d="M0 4.500H3.500L8 1V13L3.500 9.500H0Z" fill="#85837b" /><path d="M11.500 5L16.500 10M16.500 5L11.500 10" stroke="#85837b" strokeWidth="1.700" /></Svg>
    <span className="ml-[18px] w-[65px] text-[14px] whitespace-nowrap">2:44 PM</span>
    <Svg w={18} h={18}><path d="M6 4.800A5.200 5.200 0 1 0 12 4.800" stroke="#dfdbd2" strokeWidth="2.200" /><path d="M9 1V8.500M1 9H4M14 9H17M3.200 3.200L5 5M14.800 3.200L13 5M3.500 14.500L5 13M14.500 14.500L13 13M9 14V17" stroke="#dfdbd2" strokeWidth="2" /></Svg>
    <span className="ml-[5px] w-[49px] text-[14px]">sem7a</span>
  </header>
);

export default function App() {
  return (
    <div className="relative flex h-[900px] w-[1440px] flex-col overflow-hidden bg-[#f2f1f0]">
      <Defs />
      <div className="relative z-20"><TopPanel /></div>
      <div className="flex min-h-0 flex-1">
        <div className="relative z-10 flex"><Launcher /></div>
        <Spreadsheet />
      </div>
      <RapidMiner />
    </div>
  );
}
